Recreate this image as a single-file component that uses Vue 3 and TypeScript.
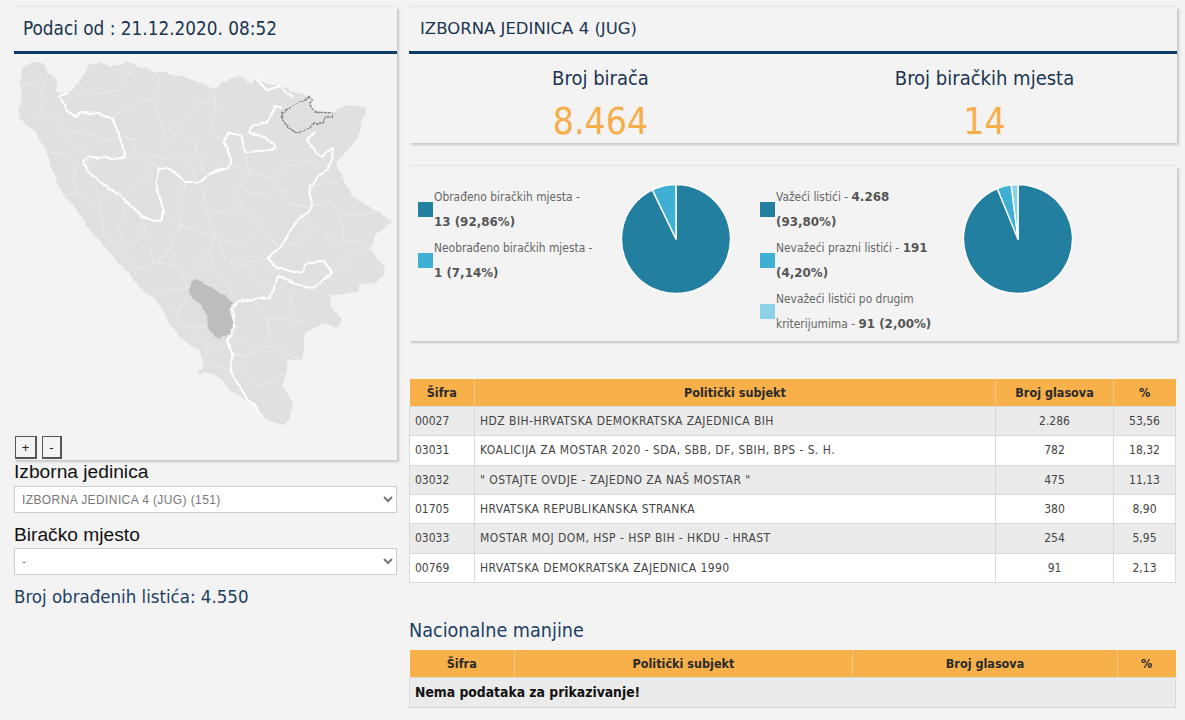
<script setup lang="ts">
type Slice = { value: number; color: string }
type LegendItem = { color: string; line1: string; bold1?: string; line2?: string; bold2?: string }

const DARK = '#237f9f'
const MID = '#3fb0d4'
const LIGHT = '#8dd0e8'

const groups: { legend: LegendItem[]; slices: Slice[] }[] = [
  {
    legend: [
      { color: DARK, line1: 'Obrađeno biračkih mjesta -', bold2: '13 (92,86%)' },
      { color: MID, line1: 'Neobrađeno biračkih mjesta -', bold2: '1 (7,14%)' }
    ],
    slices: [
      { value: 92.86, color: DARK },
      { value: 7.14, color: MID }
    ]
  },
  {
    legend: [
      { color: DARK, line1: 'Važeći listići - ', bold1: '4.268', bold2: '(93,80%)' },
      { color: MID, line1: 'Nevažeći prazni listići - ', bold1: '191', bold2: '(4,20%)' },
      { color: LIGHT, line1: 'Nevažeći listići po drugim', line2: 'kriterijumima - ', bold2: '91 (2,00%)' }
    ],
    slices: [
      { value: 93.8, color: DARK },
      { value: 4.2, color: MID },
      { value: 2, color: LIGHT }
    ]
  }
]

function piePaths(slices: Slice[]) {
  const r = 54.5
  const c = 55
  let angle = 0
  return slices.map((s) => {
    const start = angle
    angle += (s.value / 100) * Math.PI * 2
    const x1 = c + r * Math.sin(start)
    const y1 = c - r * Math.cos(start)
    const x2 = c + r * Math.sin(angle)
    const y2 = c - r * Math.cos(angle)
    const large = s.value > 50 ? 1 : 0
    return {
      d: `M${c} ${c}L${x1.toFixed(2)} ${y1.toFixed(2)}A${r} ${r} 0 ${large} 1 ${x2.toFixed(2)} ${y2.toFixed(2)}Z`,
      color: s.color
    }
  })
}

const results = [
  { code: '00027', name: 'HDZ BIH-HRVATSKA DEMOKRATSKA ZAJEDNICA BIH', votes: '2.286', pct: '53,56' },
  { code: '03031', name: 'KOALICIJA ZA MOSTAR 2020 - SDA, SBB, DF, SBIH, BPS - S. H.', votes: '782', pct: '18,32' },
  { code: '03032', name: '" OSTAJTE OVDJE - ZAJEDNO ZA NAŠ MOSTAR "', votes: '475', pct: '11,13' },
  { code: '01705', name: 'HRVATSKA REPUBLIKANSKA STRANKA', votes: '380', pct: '8,90' },
  { code: '03033', name: 'MOSTAR MOJ DOM, HSP - HSP BIH - HKDU - HRAST', votes: '254', pct: '5,95' },
  { code: '00769', name: 'HRVATSKA DEMOKRATSKA ZAJEDNICA 1990', votes: '91', pct: '2,13' }
]

const outline =
  'M21 67L34 62L42 62L49 73L56 78L57 92L67 93L79 82L89 65L101 63L111 67L127 62L137 65L157 72L166 72L181 77L196 80L211 88L217 87L230 78L240 77L253 83L255 78L267 84L280 84L293 92L300 93L308 97L315 112L332 113L347 105L367 108L360 122L358 138L347 150L337 163L343 180L353 197L370 207L393 222L377 233L370 248L383 265L385 273L377 283L358 285L358 292L337 295L328 295L333 310L342 320L337 328L325 323L305 333L302 360L288 358L283 387L293 403L290 420L282 425L263 418L250 403L230 390L220 378L207 373L197 375L205 367L200 353L180 337L167 320L163 308L153 297L140 287L128 273L110 253L90 230L84 220L62 193L54 173L46 150L34 130L19 118L21 103Z'

const entityLines = [
  'M69 93L60 96L66 110L76 117L81 112L99 113L112 118L119 135L122 145L125 157L111 158L89 157L82 162L91 173L107 187L126 200L142 217L159 222L164 213L156 183L160 168L169 168L186 182L201 182L210 173L228 167L230 157L224 143L228 133L240 135L245 152L272 150L275 147L265 138L250 132L252 127L267 122L275 105L282 108',
  'M315 132L307 140L315 153L322 157L333 147L332 163L310 185L312 208L297 220L280 248L268 258L277 268L293 273L302 272L307 263L323 262L332 273L313 288L293 282L278 276L270 298L237 301L232 310L235 327L227 340L233 353L230 370L243 393L263 417',
  'M255 78L267 90L280 86L293 98'
]

const thinLines = [
  'M21 85L35 82L41 90L42 110L38 120', 'M42 110L56 118L66 128L90 135L100 140L120 138', 'M49 73L42 90',
  'M56 130L75 145L95 160L82 162', 'M46 150L66 155L78 165L72 180L80 195L100 205L108 188', 'M62 193L80 195',
  'M100 205L105 235L125 260L145 270', 'M126 200L118 225L125 250L145 235L142 217', 'M79 82L90 95L120 90L135 65',
  'M112 118L130 105L138 103L152 100L165 130L160 150L148 165L145 180L130 190L126 200', 'M152 100L160 78',
  'M165 130L185 120L196 105L215 100L230 110', 'M160 150L175 135L195 140L200 160L205 175',
  'M125 157L140 158L155 155L165 160L178 150L192 165L196 180', 'M122 135L135 140L133 155',
  'M213 88L215 115L210 128L224 143', 'M245 152L250 170L240 190L242 205L228 215L205 210',
  'M228 167L250 170L270 178L290 165L315 160', 'M270 178L285 190L290 205L312 208', 'M240 190L265 195L285 190',
  'M242 205L260 225L280 248', 'M205 210L215 235L208 255L190 260', 'M164 213L180 225L195 230L215 235L240 245L255 235L260 225',
  'M186 182L178 205L180 225', 'M180 225L170 250L155 262L145 270', 'M215 235L225 260L240 265L268 258', 'M201 182L205 210',
  'M310 185L325 185L343 178', 'M312 208L330 200L340 215L358 215L375 212', 'M297 220L315 225L335 245L350 240L370 248',
  'M280 248L300 240L315 225', 'M332 273L345 258L370 248', 'M340 215L345 240', 'M347 272L352 262',
  'M150 250L152 262L130 277', 'M152 262L173 265L182 273L187 287L153 293', 'M175 253L173 265', 'M213 253L213 267L223 277L235 300',
  'M182 273L213 267', 'M240 257L257 280L270 285', 'M163 308L178 312L188 296', 'M178 312L177 325L207 327',
  'M192 328L203 340L207 350L217 353L228 343', 'M207 350L203 367L228 368', 'M257 303L267 320L270 340L280 352L300 358',
  'M292 290L290 307L280 318L267 320', 'M280 318L303 322', 'M233 353L247 357L270 345', 'M240 360L247 377L257 387L283 375',
  'M233 335L258 352'
]

const selectedShape = 'M198 280L205 283L217 290L232 302L230 315L235 323L230 335L217 340L208 328L207 315L188 292L193 282Z'
const dashedShape = 'M308 97L313 100L310 103L315 112L332 113L332 117L325 117L323 123L313 123L310 128L298 133L288 128L281 118L283 112L300 102Z'
</script>

<template>
  <div class="page">
    <aside class="left">
      <section class="panel map-panel">
        <header class="panel-head big">Podaci od : 21.12.2020. 08:52</header>
        <div class="map">
          <svg class="map-svg" viewBox="14 54 383 402" width="383" height="402">
            <defs>
              <filter id="rough" filterUnits="userSpaceOnUse" x="14" y="54" width="383" height="402">
                <feTurbulence type="fractalNoise" baseFrequency="0.09" numOctaves="3" seed="4" />
                <feDisplacementMap in="SourceGraphic" scale="5" xChannelSelector="R" yChannelSelector="G" />
                <feGaussianBlur stdDeviation="0.35" />
              </filter>
            </defs>
            <g filter="url(#rough)">
              <path :d="outline" fill="#e0e0e0" />
              <path v-for="(l, i) in thinLines" :key="i" :d="l" class="thin" />
              <path :d="selectedShape" fill="#bdbdbd" />
              <path v-for="(l, i) in entityLines" :key="'e' + i" :d="l" class="entity" />
              <path :d="dashedShape" class="dashed" />
            </g>
          </svg>
          <div class="zoom-btns">
            <button class="zoom-btn plus">+</button>
            <button class="zoom-btn minus">-</button>
          </div>
        </div>
      </section>
      <label class="field-label first">Izborna jedinica</label>
      <select class="field">
        <option>IZBORNA JEDINICA 4 (JUG) (151)</option>
      </select>
      <label class="field-label second">Biračko mjesto</label>
      <select class="field">
        <option>-</option>
      </select>
      <p class="ballots">Broj obrađenih listića: 4.550</p>
    </aside>

    <main class="right">
      <section class="panel summary">
        <header class="panel-head caps">IZBORNA JEDINICA 4 (JUG)</header>
        <div class="summary-row">
          <div class="stat">
            <div class="stat-label">Broj birača</div>
            <div class="stat-value">8.464</div>
          </div>
          <div class="stat">
            <div class="stat-label">Broj biračkih mjesta</div>
            <div class="stat-value">14</div>
          </div>
        </div>
      </section>

      <section class="panel charts">
        <div v-for="(g, gi) in groups" :key="gi" class="chart-group">
          <ul class="legend">
            <li v-for="(item, i) in g.legend" :key="i" class="legend-item">
              <span class="swatch" :style="{ background: item.color }"></span>
              <span class="legend-text">
                <span class="legend-line">{{ item.line1 }}<b v-if="item.bold1">{{ item.bold1 }}</b></span>
                <span class="legend-line">{{ item.line2 }}<b v-if="item.bold2">{{ item.bold2 }}</b></span>
              </span>
            </li>
          </ul>
          <svg class="pie" width="110" height="110" viewBox="0 0 110 110">
            <path v-for="(p, i) in piePaths(g.slices)" :key="i" :d="p.d" :fill="p.color" stroke="#fff" stroke-width="1.4" stroke-linejoin="round" />
          </svg>
        </div>
      </section>

      <table class="grid results">
        <colgroup>
          <col style="width: 65px" />
          <col style="width: 521px" />
          <col style="width: 118px" />
          <col />
        </colgroup>
        <thead>
          <tr>
            <th>Šifra</th>
            <th>Politički subjekt</th>
            <th>Broj glasova</th>
            <th>%</th>
          </tr>
        </thead>
        <tbody>
          <tr v-for="r in results" :key="r.code">
            <td>{{ r.code }}</td>
            <td class="name">{{ r.name }}</td>
            <td class="center">{{ r.votes }}</td>
            <td class="center">{{ r.pct }}</td>
          </tr>
        </tbody>
      </table>

      <h2 class="minorities">Nacionalne manjine</h2>
      <table class="grid empty">
        <colgroup>
          <col style="width: 105px" />
          <col style="width: 338px" />
          <col style="width: 265px" />
          <col />
        </colgroup>
        <thead>
          <tr>
            <th>Šifra</th>
            <th>Politički subjekt</th>
            <th>Broj glasova</th>
            <th>%</th>
          </tr>
        </thead>
        <tbody>
          <tr>
            <td colspan="4" class="no-data">Nema podataka za prikazivanje!</td>
          </tr>
        </tbody>
      </table>
    </main>
  </div>
</template>

<style>
body {
  background: #f3f3f3;
}
</style>

<style scoped>
.page {
  display: flex;
  gap: 12px;
  padding: 7px 8px 0 14px;
  font-family: "DejaVu Sans", Tahoma, sans-serif;
  font-stretch: condensed;
  color: #444;
}
.left {
  width: 383px;
  flex: none;
}
.right {
  width: 768px;
  flex: none;
}
.panel {
  background: #f3f3f3;
  box-shadow: 2px 2px 2px rgba(0, 0, 0, 0.18), 0 -1px 1px rgba(0, 0, 0, 0.05);
}
.panel-head {
  height: 44px;
  line-height: 44px;
  padding-left: 11px;
  border-bottom: 3px solid #0c3c66;
  font-size: 15px;
  color: #1b3550;
}
.panel-head.caps {
  font-size: 16.5px;
  font-stretch: normal;
}
.panel-head.big {
  padding-left: 9px;
  font-size: 18.8px;
}
.map {
  position: relative;
  height: 406px;
}
.map-svg {
  display: block;
}
.thin {
  fill: none;
  stroke: #ebebeb;
  stroke-width: 1;
}
.entity {
  fill: none;
  stroke: #fff;
  stroke-width: 2;
  stroke-linejoin: round;
}
.dashed {
  fill: #e0e0e0;
  stroke: #807a7a;
  stroke-width: 1.3;
  stroke-dasharray: 3 1;
}
.zoom-btns {
  position: absolute;
  left: 1px;
  bottom: 1px;
  display: flex;
  gap: 5px;
}
.zoom-btn {
  height: 23px;
  padding: 0;
  background: #f3f3f3;
  border-style: solid;
  border-width: 1px 2px 2px 1px;
  border-color: #555;
  font: 13px "Liberation Sans", Arial, sans-serif;
  color: #222;
}
.zoom-btn.plus {
  width: 22px;
}
.zoom-btn.minus {
  width: 20px;
}
.field-label {
  display: block;
  font: 19.2px/21px "Liberation Sans", Arial, sans-serif;
  color: #111;
}
.field-label.first {
  margin-top: 1px;
  margin-bottom: 4px;
}
.field-label.second {
  margin-top: 11px;
  margin-bottom: 3px;
}
.field {
  display: block;
  width: 383px;
  height: 27px;
  padding: 0 0 0 3px;
  background: #fff;
  border: 1px solid #ccc;
  border-radius: 0;
  font: 12px "Liberation Sans", Arial, sans-serif;
  letter-spacing: 0.4px;
  color: #777;
}
.ballots {
  margin: 11px 0 0;
  font-size: 18.5px;
  line-height: 22px;
  color: #1b3f63;
}
.summary {
  height: 136px;
}
.summary-row {
  display: grid;
  grid-template-columns: 383px 1fr;
}
.stat {
  text-align: center;
}
.stat-label {
  margin-top: 10px;
  font-size: 20px;
  line-height: 28px;
  color: #1b3550;
}
.stat-value {
  margin-top: 8px;
  font-size: 37px;
  line-height: 44px;
  color: #f7ae4a;
}
.charts {
  display: grid;
  grid-template-columns: 342px 1fr;
  height: 175px;
  margin-top: 23px;
  padding-top: 18px;
  box-sizing: border-box;
}
.chart-group {
  display: flex;
  align-items: flex-start;
}
.legend {
  width: 212px;
  margin: 0;
  padding: 0 0 0 9px;
  box-sizing: border-box;
  list-style: none;
  flex: none;
}
.legend-item {
  display: flex;
  align-items: center;
  gap: 1px;
  height: 51px;
}
.swatch {
  flex: none;
  width: 15px;
  height: 15px;
}
.legend-line {
  display: block;
  height: 25px;
  line-height: 25px;
  font-size: 11.9px;
  white-space: nowrap;
  color: #666;
}
.legend-line b {
  font-stretch: normal;
  color: #555;
}
.pie {
  flex: none;
  display: block;
}
.grid {
  width: 767px;
  border-collapse: collapse;
  table-layout: fixed;
  font-size: 12px;
}
.results {
  margin-top: 38px;
}
.grid th {
  height: 27px;
  padding: 0;
  background: #f8b04a;
  border-right: 1px solid #f5c98c;
  font-size: 12.5px;
  font-weight: bold;
  color: #2a2a2a;
}
.grid th:last-child {
  border-right: 0;
}
.grid td {
  height: 28.33px;
  padding: 0 5px;
  border: 1px solid #d9d9d9;
  background: #fff;
  color: #444;
}
.grid td.name {
  letter-spacing: 0.45px;
}
.grid tbody tr:nth-child(odd) td {
  background: #ebebeb;
}
.center {
  text-align: center;
}
.minorities {
  margin: 34px 0 0;
  font-size: 19.6px;
  font-weight: normal;
  line-height: 28px;
  color: #1b3f63;
}
.empty {
  margin-top: 5px;
}
.grid td.no-data {
  height: 29px;
  font-size: 13.8px;
  font-weight: bold;
  color: #111;
}
</style>
